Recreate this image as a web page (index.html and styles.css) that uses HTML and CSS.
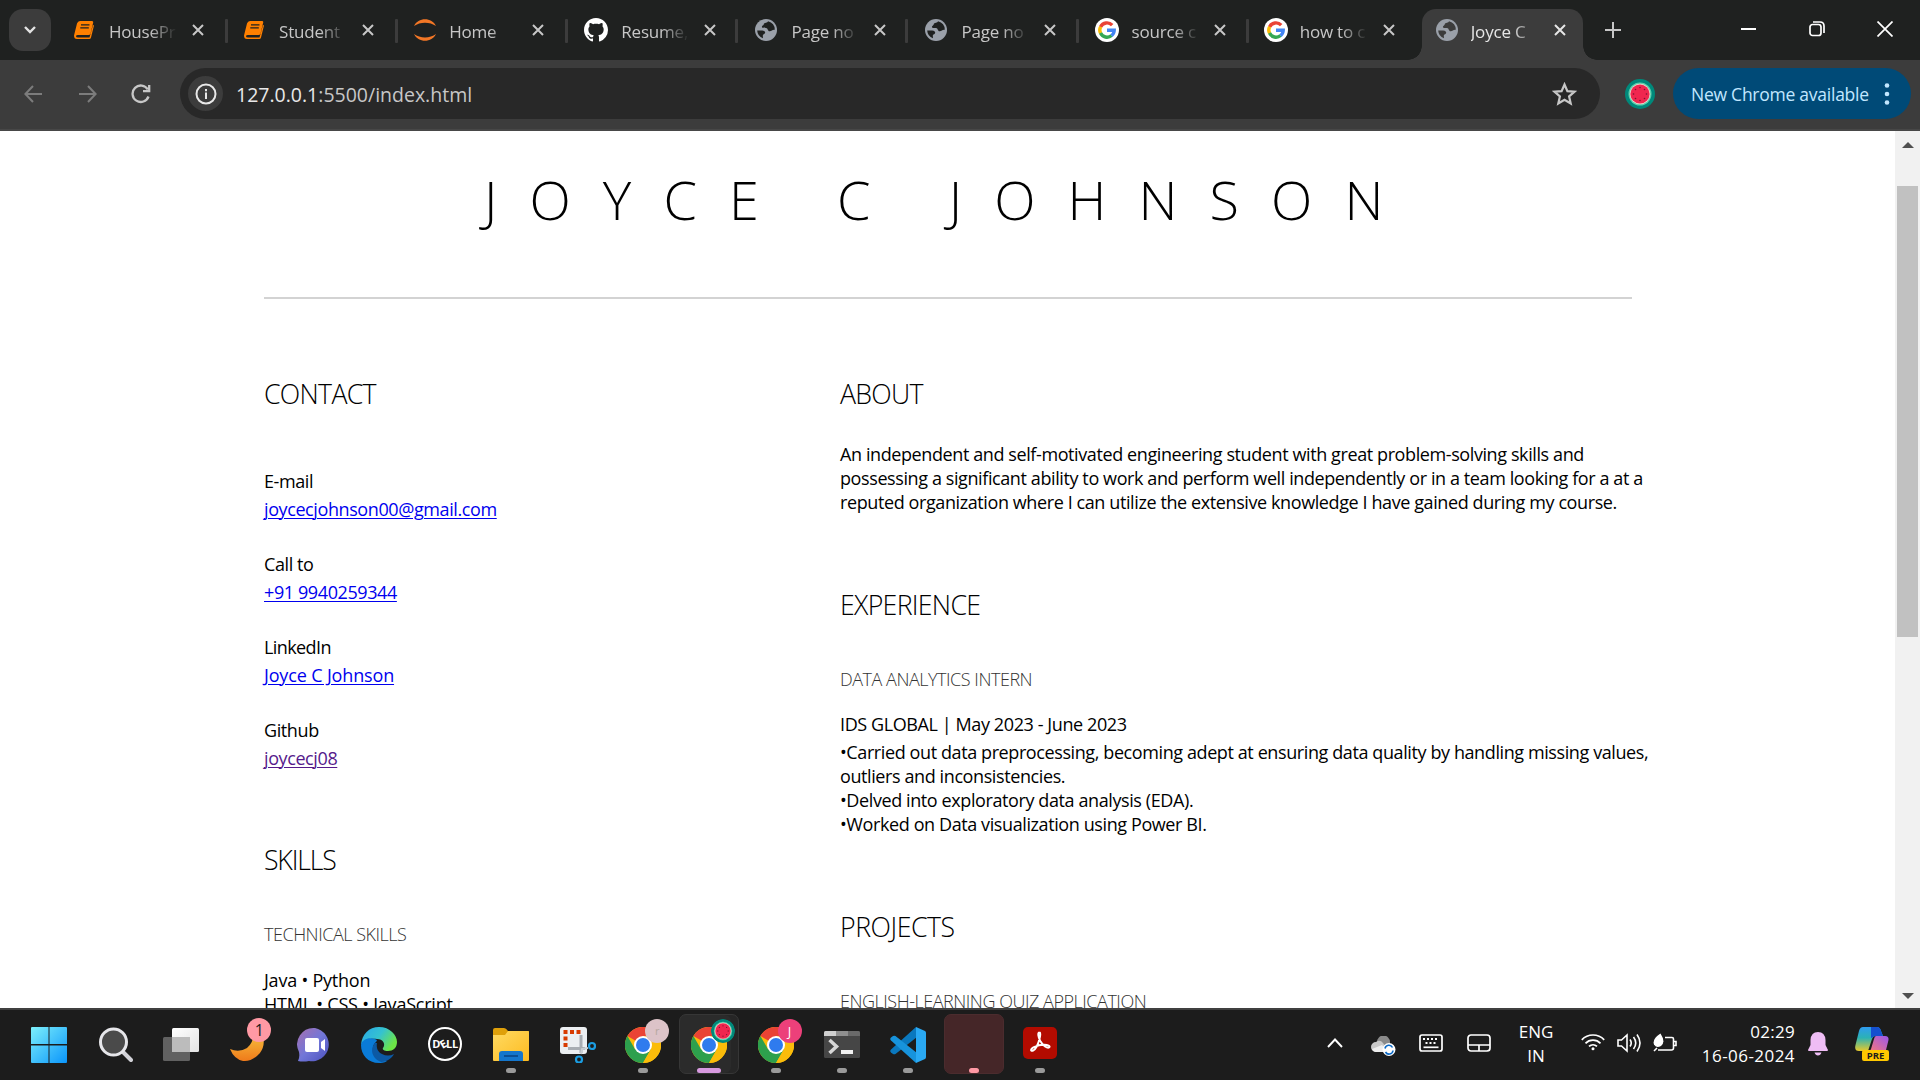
FILE: index.html
```html
<!DOCTYPE html>
<html lang="en">
<head>
<meta charset="utf-8">
<title>Joyce C Johnson</title>
<link rel="stylesheet" href="styles.css">
</head>
<body>
<svg class="defs" aria-hidden="true">
  <symbol id="close" viewBox="0 0 12 12"><path d="M1 1l10 10M11 1L1 11" stroke="currentColor" stroke-width="2" fill="none"/></symbol>
  <symbol id="book" viewBox="0 0 20 18"><path d="M6 0h12q1.500 0 1.200 1.500L16.500 12.500Q16 14 14.500 14H4q-2 0-2 1.200 0 1.300 2 1.300h11.500L19 4l1 .5-3 12q-.4 1.500-1.800 1.500H3Q0 18 0 14.500L3 2.500Q3.800 0 6 0z" fill="#ff8000"/><path d="M7 3.800h8.500M6.300 6.800h8.500" stroke="#1f2020" stroke-width="1.300"/></symbol>
  <symbol id="globe" viewBox="0 0 22 22"><circle cx="11" cy="11" r="11" fill="#9aa0a9"/><path d="M2.200 11.500c3 0 7.800-.6 8 2 .1 1.900-2.400 1.400-2.400 3.300l.2 2.500A8.900 8.900 0 0 1 2.200 11.500zM13 2.300c-.2 1.900-3.900 1.100-4.200 2.900-.3 1.500-2 1.300-1.900 2.700.1 1.300 2.300.8 4.100 1 2.200.2 1.500 3.300 3.700 3.300 2.200 0 2.300-1.700 5.100-1.400A8.900 8.900 0 0 0 13 2.300z" fill="currentColor"/></symbol>
  <symbol id="google" viewBox="0 0 24 24"><circle cx="12" cy="12" r="12" fill="#fff"/><g fill="none" stroke-width="3.400"><path d="M17.200 7.200A7.200 7.200 0 0 0 5.500 8.900" stroke="#ea4335"/><path d="M5.600 8.700a7.200 7.200 0 0 0 0 6.600" stroke="#fbbc05"/><path d="M5.500 15.100A7.200 7.200 0 0 0 16.600 17.500" stroke="#34a853"/><path d="M12 12.200h7.200a7.200 7.200 0 0 1-2.700 5.400" stroke="#4285f4"/></g></symbol>
  <symbol id="chrome" viewBox="0 0 36 36"><circle cx="18" cy="18" r="18" fill="#fbbc0a"/><path d="M18 18L2.400 9A18 18 0 0 1 33.600 9H18z" fill="#ea4335"/><path d="M2.400 9A18 18 0 0 0 18 36l7.800-13.500L18 18 10.200 22.500z" fill="#2da04d"/><path d="M18 9h15.600A18 18 0 0 1 18 36l7.800-13.500z" fill="#fbbc0a"/><circle cx="18" cy="18" r="9" fill="#fff"/><circle cx="18" cy="18" r="7" fill="#2f7bee"/></symbol>
  <symbol id="melon" viewBox="0 0 30 30"><circle cx="15" cy="15" r="15" fill="#00897b"/><circle cx="15" cy="15" r="11.500" fill="#5fd0ae"/><circle cx="15" cy="15" r="10.300" fill="#f3d9d0"/><circle cx="15" cy="15" r="9.600" fill="#f0264f"/><g fill="#7a1530"><circle cx="15" cy="8.500" r=".8"/><circle cx="19.500" cy="10.500" r=".8"/><circle cx="21.500" cy="15" r=".8"/><circle cx="19.500" cy="19.500" r=".8"/><circle cx="15" cy="21.500" r=".8"/><circle cx="10.500" cy="19.500" r=".8"/><circle cx="8.500" cy="15" r=".8"/><circle cx="10.500" cy="10.500" r=".8"/></g></symbol>
</svg>

<div class="tabstrip">
  <div class="tab-search"><svg width="12" height="8" viewBox="0 0 12 8"><path d="M1 1l5 5 5-5" stroke="#e3e3e3" stroke-width="2.400" fill="none"/></svg></div>
  <div class="tabs">
    <div class="tab"><div class="fav book"><svg width="20" height="18"><use href="#book"/></svg></div><span class="label">HousePr</span><svg class="x" width="12" height="12"><use href="#close"/></svg></div>
    <div class="tab"><div class="fav book"><svg width="20" height="18"><use href="#book"/></svg></div><span class="label">Student</span><svg class="x" width="12" height="12"><use href="#close"/></svg></div>
    <div class="tab"><div class="fav"><svg width="24" height="24" viewBox="0 0 24 24" fill="#f37726"><path d="M1 8C5-1 19-1 23 8 17 3.500 7 3.500 1 8zM1 16c4 9 18 9 22 0-6 4.500-16 4.500-22 0z"/></svg></div><span class="label">Home</span><svg class="x" width="12" height="12"><use href="#close"/></svg></div>
    <div class="tab"><div class="fav wide"><svg width="24" height="24" viewBox="0 0 16 16" fill="#fff"><path d="M8 0C3.580 0 0 3.580 0 8c0 3.540 2.290 6.530 5.470 7.590.4.070.55-.17.55-.38 0-.19-.01-.82-.01-1.490-2.010.37-2.530-.49-2.690-.94-.09-.23-.48-.94-.82-1.130-.28-.15-.68-.52-.01-.53.63-.01 1.080.58 1.230.82.72 1.210 1.870.87 2.330.66.070-.52.28-.87.51-1.070-1.780-.2-3.640-.89-3.640-3.950 0-.87.310-1.590.82-2.150-.08-.2-.36-1.020.08-2.120 0 0 .67-.21 2.200.82.640-.18 1.320-.27 2-.27s1.360.09 2 .27c1.530-1.040 2.200-.82 2.200-.82.440 1.100.160 1.920.080 2.120.510.560.820 1.270.820 2.150 0 3.070-1.870 3.750-3.650 3.950.290.250.540.730.540 1.480 0 1.070-.01 1.930-.01 2.200 0 .21.150.460.550.380A8.010 8.010 0 0 0 16 8c0-4.420-3.580-8-8-8z"/></svg></div><span class="label">Resume,</span><svg class="x" width="12" height="12"><use href="#close"/></svg></div>
    <div class="tab"><div class="fav wide"><svg width="22" height="22"><use href="#globe"/></svg></div><span class="label">Page no</span><svg class="x" width="12" height="12"><use href="#close"/></svg></div>
    <div class="tab"><div class="fav wide"><svg width="22" height="22"><use href="#globe"/></svg></div><span class="label">Page no</span><svg class="x" width="12" height="12"><use href="#close"/></svg></div>
    <div class="tab"><div class="fav wide"><svg width="24" height="24"><use href="#google"/></svg></div><span class="label">source c</span><svg class="x" width="12" height="12"><use href="#close"/></svg></div>
    <div class="tab last"><div class="fav"><svg width="24" height="24"><use href="#google"/></svg></div><span class="label">how to c</span><svg class="x" width="12" height="12"><use href="#close"/></svg></div>
    <div class="tab active"><div class="fav"><svg width="22" height="22"><use href="#globe"/></svg></div><span class="label">Joyce C</span><svg class="x" width="12" height="12"><use href="#close"/></svg></div>
  </div>
  <svg class="plus" width="16" height="16" viewBox="0 0 16 16"><path d="M8 0v16M0 8h16" stroke="#c7c7c7" stroke-width="2"/></svg>
  <div class="winctl">
    <svg width="16" height="16" viewBox="0 0 16 16"><path d="M0 8h15" stroke="#fff" stroke-width="2"/></svg>
    <svg width="16" height="16" viewBox="0 0 16 16" fill="none" stroke="#fff" stroke-width="1.700"><rect x="1" y="3.500" width="11" height="11" rx="2.500"/><path d="M4 1h7q4 0 4 4v7"/></svg>
    <svg width="16" height="16" viewBox="0 0 16 16"><path d="M.5.5l15 15M15.500.5l-15 15" stroke="#fff" stroke-width="1.700"/></svg>
  </div>
</div>

<div class="toolbar">
  <div class="nav">
    <svg width="20" height="20" viewBox="0 0 20 20" fill="none" stroke="#7c7c7c" stroke-width="2"><path d="M18 10H2M9 2L1.400 10l7.600 8"/></svg>
    <svg width="20" height="20" viewBox="0 0 20 20" fill="none" stroke="#7c7c7c" stroke-width="2"><path d="M1 10h16M10 2l7.600 8-7.600 8"/></svg>
    <svg width="20" height="20" viewBox="0 0 20 20" fill="none" stroke="#c7c7c7" stroke-width="2.300"><path d="M17.500 12.500A8.200 8.200 0 1 1 16.800 5.500M18.200 1v6.200H12"/></svg>
  </div>
  <div class="omnibox">
    <div class="info"><svg width="22" height="22" viewBox="0 0 22 22"><circle cx="11" cy="11" r="9.500" fill="none" stroke="#e8e8e8" stroke-width="2"/><path d="M11 9.500v6.500M11 6v2.200" stroke="#e8e8e8" stroke-width="2"/></svg></div>
    <span class="url"><b>127.0.0.1</b>:5500/index.html</span>
    <svg class="star" width="25" height="24" viewBox="0 0 25 24"><path d="M12.500 2.500l2.900 6.600 7.100.6-5.400 4.700 1.600 7-6.200-3.700-6.200 3.700 1.600-7-5.400-4.700 7.100-.6z" fill="none" stroke="#c7c7c7" stroke-width="2.200"/></svg>
  </div>
  <svg class="profile" width="30" height="30"><use href="#melon"/></svg>
  <div class="update"><span>New Chrome available</span><svg width="6" height="22" viewBox="0 0 6 22" fill="#c2e7ff"><circle cx="3" cy="2.500" r="2.300"/><circle cx="3" cy="11" r="2.300"/><circle cx="3" cy="19.500" r="2.300"/></svg></div>
</div>

<div class="viewport">
  <main class="page">
    <h1>JOYCE C JOHNSON</h1>
    <div class="rule"></div>
    <div class="columns">
      <section class="left">
        <h2>CONTACT</h2>
        <dl class="contact">
          <dt>E-mail</dt><dd><a href="#m">joycecjohnson00@gmail.com</a></dd>
          <dt>Call to</dt><dd><a href="#c">+91 9940259344</a></dd>
          <dt>LinkedIn</dt><dd><a class="name" href="#l">Joyce C Johnson</a></dd>
          <dt>Github</dt><dd><a class="seen" href="#g">joycecj08</a></dd>
        </dl>
        <h2 class="skills">SKILLS</h2>
        <h3>TECHNICAL SKILLS</h3>
        <p>Java • Python</p>
        <p>HTML • CSS • JavaScript</p>
      </section>
      <section class="right">
        <h2>ABOUT</h2>
        <div class="about">
          <p>An independent and self-motivated engineering student with great problem-solving skills and</p>
          <p>possessing a significant ability to work and perform well independently or in a team looking for a at a</p>
          <p>reputed organization where I can utilize the extensive knowledge I have gained during my course.</p>
        </div>
        <h2 class="experience">EXPERIENCE</h2>
        <h3>DATA ANALYTICS INTERN</h3>
        <p class="role">IDS GLOBAL | May 2023 - June 2023</p>
        <p>•Carried out data preprocessing, becoming adept at ensuring data quality by handling missing values,</p>
        <p>outliers and inconsistencies.</p>
        <p>•Delved into exploratory data analysis (EDA).</p>
        <p>•Worked on Data visualization using Power BI.</p>
        <h2 class="projects">PROJECTS</h2>
        <h3>ENGLISH-LEARNING QUIZ APPLICATION</h3>
      </section>
    </div>
  </main>
  <div class="scrollbar">
    <svg width="12" height="6" viewBox="0 0 12 6"><path d="M0 6l6-6 6 6z" fill="#505050"/></svg>
    <div class="thumb"></div>
    <svg width="12" height="6" viewBox="0 0 12 6"><path d="M0 0h12L6 6z" fill="#505050"/></svg>
  </div>
</div>

<footer class="taskbar">
  <div class="apps">
    <div class="app"><svg width="36" height="36" viewBox="0 0 36 36"><defs><linearGradient id="win" x1="0" y1="0" x2="36" y2="36" gradientUnits="userSpaceOnUse"><stop stop-color="#7df0fb"/><stop offset="1" stop-color="#0a95fb"/></linearGradient></defs><path d="M1 0h16.500v17H0V1q0-1 1-1zM18.500 0H35q1 0 1 1v16H18.500zM0 18.500h17.500V36H1q-1 0-1-1zM18.500 18.500H36V35q0 1-1 1H18.500z" fill="url(#win)"/></svg></div>
    <div class="app"><svg class="nudge" width="34" height="36" viewBox="0 0 34 36"><path d="M23 24l9 9" stroke="#d2d2d8" stroke-width="4" stroke-linecap="round"/><circle cx="14.500" cy="15" r="13" fill="#4a4a4a" stroke="#e6e6ea" stroke-width="3"/></svg></div>
    <div class="app"><svg width="36" height="36" viewBox="0 0 36 36"><defs><linearGradient id="tv" x1="0" y1="0" x2="1" y2="1"><stop stop-color="#fff"/><stop offset="1" stop-color="#e3e3e3"/></linearGradient></defs><rect x="0" y="10" width="27" height="24" rx="1.500" fill="#616161"/><rect x="9" y="1" width="27" height="24" rx="1.500" fill="url(#tv)"/><path d="M9 10h18v15H9z" fill="#bcbcbc"/></svg></div>
    <div class="app"><svg width="36" height="36" viewBox="0 0 36 36"><defs><linearGradient id="moon" x1="0" y1="0" x2="0" y2="1"><stop stop-color="#f7c741"/><stop offset="1" stop-color="#ef7a1a"/></linearGradient></defs><path d="M32 4q6 12-1 22-8 9-17 8Q5 32 1 22q9 4 17-1 7-6 6-14z" fill="url(#moon)"/></svg><span class="count">1</span></div>
    <div class="app"><svg class="nudge chat" width="36" height="36" viewBox="0 0 36 36"><defs><linearGradient id="chat" x1="0" y1="0" x2="1" y2="1"><stop stop-color="#a86fae"/><stop offset=".5" stop-color="#7277d8"/><stop offset="1" stop-color="#4b50bd"/></linearGradient></defs><path d="M18 1a16.500 16.500 0 1 1-6 33Q6 35 1 34q2-4 1-9A16.500 16.500 0 0 1 18 1z" fill="url(#chat)"/><rect x="8" y="11" width="14" height="14" rx="2" fill="#fff"/><path d="M24 15l4-3v12l-4-3z" fill="#fff"/></svg></div>
    <div class="app"><svg width="36" height="36" viewBox="0 0 36 36"><defs><linearGradient id="ed" x1="0" y1="0" x2="1" y2=".5"><stop stop-color="#28a7ea"/><stop offset=".55" stop-color="#35c2d0"/><stop offset="1" stop-color="#6ce546"/></linearGradient></defs><path d="M0 18C1 7 8 0 18 0c11 0 18 8 18 15 0 6-4 9-9 9-4 0-6-1.500-5-3 3-4 0-9-6-9C8 11 2 14 0 18z" fill="url(#ed)"/><path d="M0 18c1-6 8-8 14-6 3 1 2 2 0 4-6 7 2 18 12 18-3 2-6 2-8 2C7 36 0 28 0 18z" fill="#0a7bd8"/><path d="M14 16c-6 7-2 16 6 19 6 0 11-4 13-8-4 2-8 2-12 0-4-2-6-6-5-11z" fill="#0c59a4"/></svg></div>
    <div class="app"><div class="dell">D<i>E</i>LL</div></div>
    <div class="app"><svg width="36" height="36" viewBox="0 0 36 36"><defs><linearGradient id="fo" x1="0" y1="0" x2="1" y2="1"><stop stop-color="#ffda62"/><stop offset="1" stop-color="#fdbb20"/></linearGradient></defs><path d="M0 3q0-2 2-2h9q2 0 4 3H35q1 0 1 1v6H0z" fill="#dfa00a"/><path d="M0 8h12l3-4h20q1 0 1 1v28q0 1-1 1H1q-1 0-1-1z" fill="url(#fo)"/><path d="M6 34V27q0-3 3-3h18q3 0 3 3v7z" fill="#1476cc"/><path d="M11 29h14" stroke="#0b4f94" stroke-width="2"/></svg><i class="run"></i></div>
    <div class="app"><svg class="nudge" width="36" height="36" viewBox="0 0 36 36"><rect x="0" y="0" width="27" height="27" rx="3" fill="#eceff2"/><path d="M3.500 5h17" stroke="#d83b01" stroke-width="4" stroke-dasharray="4 2.500"/><path d="M5.500 9.500v11" stroke="#d83b01" stroke-width="4" stroke-dasharray="4 2.500"/><path d="M21 8v18M8 21.500h17" stroke="#a8adb3" stroke-width="3"/><path d="M21 27l1-5 6-1" stroke="#c9ced3" stroke-width="2" fill="none"/><circle cx="32" cy="19" r="3" fill="none" stroke="#1b9de2" stroke-width="2.200"/><circle cx="19" cy="32.500" r="3" fill="none" stroke="#1b9de2" stroke-width="2.200"/></svg></div>
    <div class="app"><svg width="36" height="36"><use href="#chrome"/></svg><span class="avatar blank">r</span><i class="run"></i></div>
    <div class="app"><div class="tile"><svg width="36" height="36"><use href="#chrome"/></svg></div><svg class="avatar" width="24" height="24"><use href="#melon"/></svg><i class="run wide"></i></div>
    <div class="app"><svg width="36" height="36"><use href="#chrome"/></svg><span class="avatar pink">J</span><i class="run"></i></div>
    <div class="app"><svg width="36" height="36" viewBox="0 0 36 36"><rect y="4" width="36" height="27" rx="1.500" fill="#464646"/><path d="M0 9V5.500Q0 4 1.500 4H12v5z" fill="#cfcfcf"/><path d="M12 4h12v5H12z" fill="#8f8f8f"/><path d="M24 4h10.500Q36 4 36 5.500V9H24z" fill="#6a6a6a"/><path d="M5.500 13l7 6.500-7 6.500" fill="none" stroke="#d8d8d8" stroke-width="3.500"/><path d="M17 25h12" stroke="#f2f2f2" stroke-width="4"/></svg><i class="run"></i></div>
    <div class="app"><svg width="36" height="36" viewBox="0 0 36 36"><path d="M26 0L1 22.500q-1.500 1.500 0 3L3 27q1.200.7 2.500 0L27 10z" fill="#0a78be"/><path d="M26 36L1 13.500q-1.500-1.500 0-3L3 9q1.200-.7 2.500 0L27 26z" fill="#1793dc"/><path d="M26 0l9 4q1 .6 1 2v24q0 1.400-1 2l-9 4z" fill="#2aa9f3"/></svg><i class="run"></i></div>
    <div class="app"><div class="tile red"></div><i class="run rose"></i></div>
    <div class="app"><svg class="pdf" width="34" height="32" viewBox="0 0 34 32"><rect width="34" height="32" rx="5" fill="#b30b00"/><path d="M16.500 5.500c-2 0-1.500 4 .8 8.500 2.800 5 7 7.500 8.800 6.500 1.800-1.200-1-3-6-2.700-5.500.4-11.500 2.700-12 4.900-.5 2 3 1.800 5.500-3 2.500-5 5-14.200 2.900-14.200z" fill="none" stroke="#fff" stroke-width="1.900"/></svg><i class="run"></i></div>
  </div>
  <div class="tray">
    <div class="cell"><svg width="16" height="10" viewBox="0 0 16 10"><path d="M1 9l7-7.500L15 9" fill="none" stroke="#fff" stroke-width="1.900"/></svg></div>
    <div class="cell"><svg class="low" width="25" height="20" viewBox="0 0 25 20"><path d="M6 6a6.500 6.500 0 0 1 13 0v5H6z" fill="#8a8a8a"/><path d="M5 16a5 5 0 0 1 0-10q4-3 7 1l6 9z" fill="#c9c9c9"/><path d="M1 13l10-4 6 7H5q-3 0-4-3z" fill="#eee"/><circle cx="18" cy="13.500" r="6.500" fill="#fff"/><path d="M14 12.500a4 4 0 0 1 7.500-1M22 14.500a4 4 0 0 1-7.500 1.500" fill="none" stroke="#0a69c7" stroke-width="1.600"/></svg></div>
    <div class="cell"><svg width="24" height="18" viewBox="0 0 24 18" fill="none" stroke="#fff"><rect x="1" y="1" width="22" height="16" rx="2" stroke-width="1.700"/><path d="M4 5h16M6.500 9h11" stroke-width="2" stroke-dasharray="2 2"/><path d="M4.500 13.300h15" stroke-width="1.700"/></svg></div>
    <div class="cell"><svg width="24" height="18" viewBox="0 0 24 18" fill="none" stroke="#fff" stroke-width="1.700"><rect x="1" y="1" width="22" height="16" rx="3"/><path d="M1 11h22M12 11v6"/></svg></div>
    <div class="lang"><span>ENG</span><span>IN</span></div>
    <div class="net">
      <svg width="24" height="18" viewBox="0 0 24 18" fill="none" stroke="#fff" stroke-width="1.700"><path d="M.8 6.800a15.500 15.500 0 0 1 22.400 0M4.500 10.300a10.500 10.500 0 0 1 15 0M8 13.300a6 6 0 0 1 8 0"/><circle cx="12" cy="15.800" r="1.500" fill="#fff" stroke="none"/></svg>
      <svg width="24" height="20" viewBox="0 0 24 20" fill="none" stroke="#fff" stroke-width="1.600"><path d="M1 7h3.500L10 2v16l-5.500-5H1zM13 6.500q2.500 3.500 0 7M16.500 4q4.500 6 0 12M20 1.500q6 8.500 0 17"/></svg>
      <svg width="24" height="20" viewBox="0 0 24 20" fill="none" stroke="#fff" stroke-width="1.600"><path d="M12 4.500h7q1.500 0 1.500 1.500v9q0 2-2 2H5M20.500 8.500h2.500v4h-2.500M1 18l3-3"/><path d="M7.500.5Q-1 6 1 11.500q2 4 7 1.500Q13 9 7.500.5z" fill="#fff" stroke="none"/></svg>
    </div>
    <div class="clock"><span>02:29</span><span class="date">16-06-2024</span></div>
    <svg class="bell" width="20" height="24" viewBox="0 0 20 24" fill="#efbdf5"><path d="M10 0q7 0 7.500 8v5l2.500 5q0 1-1 1H1q-1 0-1-1l2.500-5V8Q3 0 10 0zM6.500 20.500h7q-1 3-3.500 3t-3.500-3z"/></svg>
    <div class="copilot"><svg width="34" height="32" viewBox="0 0 34 32"><defs><linearGradient id="c1" x1="0" y1="0" x2="0" y2="1"><stop stop-color="#2f9bf0"/><stop offset=".45" stop-color="#2bb2b4"/><stop offset="1" stop-color="#e8c92b"/></linearGradient><linearGradient id="c2" x1="1" y1="0" x2="0" y2="1"><stop stop-color="#9b57ee"/><stop offset="1" stop-color="#fb7a72"/></linearGradient></defs><path d="M8 0h14q3 0 4 4l2 5h-8q-2 0-3 3l-4 12H4q-5 0-3.500-6L4 4q1-4 4-4z" fill="url(#c1)"/><path d="M16 0h6q3 0 4 4l2 5h-8l-4 2z" fill="#1550cf"/><path d="M21 9h9q4 0 3.500 4l-3 12H13q2 0 3-3l3-10q.7-3 2-3z" fill="url(#c2)"/></svg><b class="pre">PRE</b></div>
  </div>
</footer>
</body>
</html>
```
FILE: styles.css
```css
* { box-sizing: border-box; margin: 0; padding: 0; }
html, body { width: 1920px; height: 1080px; overflow: hidden; }
body { display: flex; flex-direction: column; font-family: "Open Sans", "Noto Sans", sans-serif; background: #fff; color: #000; }
svg { display: block; flex: none; }
.defs { width: 0; height: 0; position: absolute; }

/* Tab strip */
.tabstrip { flex: none; height: 60px; background: #1f2120; display: flex; align-items: flex-start; padding-left: 9px; }
.tab-search { width: 42px; height: 42px; margin-top: 9px; border-radius: 14px; background: #3c3c3c; display: flex; align-items: center; justify-content: center; }
.tabs { display: flex; margin-left: 8px; color: #1f2120; }
.tab { position: relative; width: 170.100px; height: 60px; display: flex; align-items: center; padding-left: 13px; }
.tab::after { content: ""; position: absolute; right: 1px; top: 19px; width: 3px; height: 24px; background: #3c3c3c; border-radius: 1px; }
.tab.last::after { display: none; }
.fav { width: 26px; display: flex; justify-content: center; }
.fav.book { padding-right: 3px; }
.fav.wide { width: 28px; }
.label { width: 68px; margin-left: 11px; padding-top: 2px; overflow: hidden; white-space: nowrap; font-size: 17px; letter-spacing: -0.200px; color: #c7c7c7; -webkit-mask-image: linear-gradient(90deg, #000 60%, transparent 100%); mask-image: linear-gradient(90deg, #000 60%, transparent 100%); }
.tab .x { margin-left: 15px; color: #c7c7c7; }
.fav.wide ~ .x { margin-left: 14.500px; }
.tab.active { width: 161px; margin-left: 2px; height: 51px; margin-top: 9px; padding-bottom: 9px; padding-left: 12px; border-radius: 14px 14px 0 0; background: #3c3c3c; color: #3c3c3c; }
.tab.active::before, .tab.active::after { content: ""; position: absolute; top: auto; bottom: 0; width: 14px; height: 14px; border-radius: 0; }
.tab.active::before { left: -14px; background: radial-gradient(circle at 0 0, transparent 13.500px, #3c3c3c 14px); }
.tab.active::after { right: -14px; background: radial-gradient(circle at 100% 0, transparent 13.500px, #3c3c3c 14px); }
.tab.active .label, .tab.active .x { color: #e6e6e6; }
.plus { margin: 22px 0 0 22px; }
.winctl { display: flex; gap: 52px; margin: 21px 27px 0 auto; }

/* Toolbar */
.toolbar { flex: none; height: 71px; background: #3c3c3c; border-bottom: 2px solid #474747; display: flex; align-items: center; padding: 0 9px 2px 24px; }
.nav { display: flex; gap: 33.500px; width: 156px; }
.omnibox { width: 1420px; height: 51px; border-radius: 26px; background: #282828; display: flex; align-items: center; padding: 0 23px 0 8px; }
.info { width: 35px; height: 35px; border-radius: 50%; background: #3c3c3c; display: flex; align-items: center; justify-content: center; }
.url { margin-left: 13px; padding-top: 1px; font-size: 19.500px; color: #c7c7c7; white-space: nowrap; }
.url b { font-weight: 400; color: #e8e8e8; }
.star { margin-left: auto; }
.profile { margin-left: 25px; }
.update { margin-left: auto; width: 238px; height: 51px; border-radius: 26px; background: #004a77; color: #c2e7ff; font-size: 17.500px; letter-spacing: -0.250px; display: flex; align-items: center; justify-content: space-between; padding: 1px 21px 0 18px; white-space: nowrap; }

/* Document */
.viewport { flex: none; height: 877px; display: flex; overflow: hidden; }
.page { width: 1895px; padding: 0 0 0 264px; }
h1 { margin: 31px 0 0 220px; height: 74px; line-height: 74px; font-size: 54px; font-weight: 300; letter-spacing: 32.100px; white-space: nowrap; }
.rule { width: 1368px; height: 2px; margin-top: 61px; background: #d3d3d3; }
.columns { display: flex; margin-top: 77px; white-space: nowrap; }
.left { width: 576px; }
h2 { height: 36px; line-height: 36px; font-size: 26.700px; font-weight: 300; letter-spacing: -0.700px; }
h3 { height: 24px; line-height: 24px; font-size: 18px; font-weight: 300; letter-spacing: -0.470px; color: #333; margin: 44px 0 21px; }
p, dt, dd { height: 24px; line-height: 24px; font-size: 18px; letter-spacing: -0.400px; }
.contact { margin-top: 57px; }
dt { margin-bottom: 3.500px; }
dd { margin-bottom: 31.500px; }
dt:nth-of-type(3) { letter-spacing: -0.600px; }
a { color: #0000ee; text-underline-offset: 2px; text-decoration-thickness: 1px; }
a.seen { color: #551a8b; }
a.name { letter-spacing: -0.150px; }
.skills { margin-top: 72px; letter-spacing: -1.200px; }
.left h3 { margin-bottom: 22.500px; }
.left p { letter-spacing: -0.220px; }
.about { margin-top: 30px; }
.experience { margin-top: 73px; }
.projects { margin-top: 73px; letter-spacing: -0.450px; }
.role { margin-bottom: 4px; }

.scrollbar { width: 25px; background: #f1f1f1; display: flex; flex-direction: column; align-items: center; padding: 11px 0 9px; }
.thumb { width: 21px; height: 451px; margin: 38px 0 auto; background: #c1c1c1; }

/* Taskbar */
.taskbar { flex: none; height: 72px; background: #1c1c1c; border-top: 2px solid #404040; display: flex; color: #fff; }
.apps { display: flex; padding-left: 15.500px; width: 1311px; }
.app { position: relative; width: 66.100px; height: 70px; display: flex; justify-content: center; padding-top: 16.500px; }
.nudge { margin-left: 2px; }
.nudge.chat { margin-left: 4px; }
.run { position: absolute; bottom: 7px; left: 50%; width: 10px; height: 5px; margin-left: -5px; border-radius: 3px; background: #9a9a9a; }
.run.wide { width: 24px; margin-left: -12px; background: #d89ae0; }
.run.rose { background: #ff99a4; }
.tile { width: 60px; height: 60px; margin-top: -12.500px; border-radius: 7px; background: #2b2b2b; border: 1px solid #363636; display: flex; justify-content: center; padding-top: 11.500px; box-shadow: inset -7px 0 0 #262626; }
.tile.red { background: #452628; border-color: #4b2c2e; box-shadow: none; }
.count { position: absolute; left: 33.500px; top: 8px; width: 24px; height: 24px; border-radius: 50%; background: #ff99a4; color: #1c1c1c; font-size: 16px; line-height: 24px; text-align: center; }
.avatar { position: absolute; left: 35px; top: 9px; width: 24px; height: 24px; border-radius: 50%; font-size: 13px; line-height: 24px; text-align: center; }
.avatar.blank { background: #dcc3c8; color: #b6a7a0; font-size: 11px; }
.avatar.pink { background: #ec407a; color: #fff; }
.dell { width: 34px; height: 34px; border: 2px solid #fff; border-radius: 50%; font-size: 11px; font-weight: 700; line-height: 30px; text-align: center; letter-spacing: -0.300px; white-space: nowrap; }
.dell i { display: inline-block; transform: rotate(-30deg); font-style: normal; }
.tray { display: flex; align-items: center; height: 66px; width: 609px; }
.cell { width: 48px; display: flex; justify-content: center; }
.low { margin-top: 6px; }
.lang, .clock { display: flex; flex-direction: column; font-size: 17px; line-height: 23.500px; padding-top: 1px; }
.lang { width: 66px; align-items: center; }
.net { display: flex; gap: 12px; margin-left: 12px; }
.clock { margin-left: auto; align-items: flex-end; letter-spacing: 0.300px; }
.date { letter-spacing: 0.450px; }
.bell { margin: 2px 27px 0 13px; }
.copilot { position: relative; margin-right: 31px; }
.pre { position: absolute; left: 7px; top: 23px; width: 27px; height: 11px; border-radius: 2px; background: #ffc800; color: #1c1c1c; font-size: 9.500px; line-height: 11px; text-align: center; }
```
